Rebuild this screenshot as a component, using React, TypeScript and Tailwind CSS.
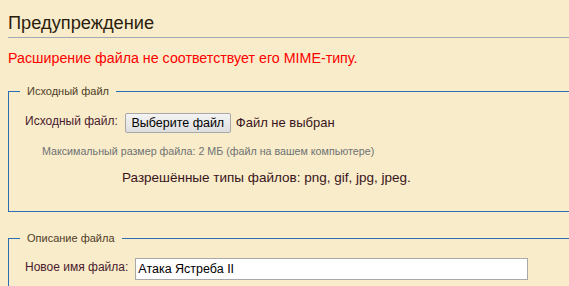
export default function App() {
  return (
    <div className="h-[286px] w-[569px] overflow-hidden bg-[#f8ecca] font-['Liberation_Sans',Arial,sans-serif]">
      <div className="pl-[8px] pt-[12px]">
        <h2 className="border-b border-[#a2a9b1] pb-[4px] text-[18.25px] leading-[21px] text-[#2b1d0e]">
          Предупреждение
        </h2>
        <p className="mt-[12px] text-[14.25px] leading-[17px] text-[#ff0000]">
          Расширение файла не соответствует его MIME-типу.
        </p>

        <fieldset className="mt-[18px] -mr-[4px] border border-r-0 border-[#2a6db3] pb-[25px] pl-[11px] pt-0">
          <legend className="px-[7px] text-[11px] leading-[13px] text-[#4f3d28]">Исходный файл</legend>
          <div className="ml-[5px] mt-[15px] flex items-start">
            <span className="pt-[1px] text-[12px] leading-[15px] text-[#4a1a2e]">Исходный файл:</span>
            <div className="ml-[7px] flex items-center">
              <button
                type="button"
                className="h-[20px] w-[106px] rounded-[2px] border border-[#a8a8a8] bg-gradient-to-b from-[#f4f4f4] to-[#dedede] text-[12.5px] leading-[18px] text-black"
              >
                Выберите файл
              </button>
              <span className="ml-[5px] text-[13px] leading-[16px] text-[#3a1420]">Файл не выбран</span>
            </div>
          </div>
          <p className="ml-[22px] mt-[12px] text-[10.7px] leading-[12px] text-[#6f7272]">
            Максимальный размер файла: 2 МБ (файл на вашем компьютере)
          </p>
          <p className="ml-[102px] mt-[13px] text-[13.5px] leading-[16px] text-[#3a1420]">
            Разрешённые типы файлов: png, gif, jpg, jpeg.
          </p>
        </fieldset>

        <fieldset className="mt-[20px] -mr-[4px] border border-r-0 border-[#2a6db3] pb-[20px] pl-[11px] pt-0">
          <legend className="px-[7px] text-[11px] leading-[13px] text-[#4f3d28]">Описание файла</legend>
          <div className="ml-[5px] mt-[13px] flex items-start">
            <span className="pt-[2px] text-[12px] leading-[15px] text-[#4a1a2e]">Новое имя файла:</span>
            <input
              readOnly
              value="Атака Ястреба II"
              className="ml-[7px] h-[22px] w-[393px] border border-[#a9a9a9] bg-white px-[2px] text-[12.5px] text-black outline-none"
            />
          </div>
        </fieldset>
      </div>
    </div>
  )
}
